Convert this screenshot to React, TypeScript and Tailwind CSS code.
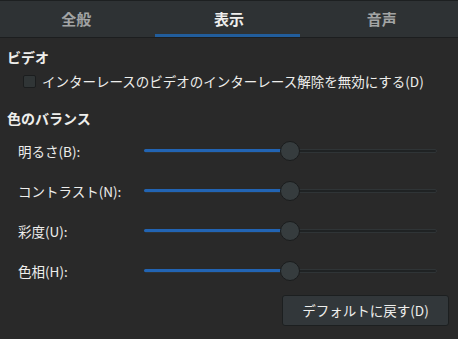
import React from 'react';

const font = { fontFamily: '"Noto Sans CJK JP", "Noto Sans", sans-serif' };

const tabs = ['全般', '表示', '音声'];

const Slider = () => (
  <div className="relative h-[20px] w-[293px]">
    <div className="absolute left-0 right-0 top-[8px] h-[4px] rounded-full bg-[#1f2223] border border-[#2f3436]"></div>
    <div className="absolute left-0 top-[8px] h-[3px] w-[145px] rounded-full bg-[#2264b3]"></div>
    <div className="absolute left-[136px] top-0 h-[20px] w-[20px] rounded-full bg-[#363c3e] border border-[#1a1c1d]"></div>
  </div>
);

const rows = ['明るさ(B):', 'コントラスト(N):', '彩度(U):', '色相(H):'];

export default function App() {
  const [checked, setChecked] = React.useState(false);
  return (
    <div className="w-[458px] h-[339px] bg-[#292929] text-[#eeeeec] flex flex-col overflow-hidden" style={font}>
      <div className="flex h-[38px] bg-[#2e3234] border-t border-[#1d2021] border-b border-b-[#1c1e1f]">
        {tabs.map((t, i) => (
          <div
            key={t}
            className={`relative flex-1 flex items-center justify-center text-[15px] font-bold ${i === 1 ? 'text-[#eeeeec]' : 'text-[#a2a4a4]'}`}
          >
            {t}
            {i === 1 && <div className="absolute left-[2px] right-[5px] bottom-0 h-[3px] bg-[#215d9c]"></div>}
          </div>
        ))}
      </div>

      <div className="flex flex-col px-[7px]">
        <div className="h-[36px] flex items-center pt-[2px] text-[14px] font-bold">ビデオ</div>
        <label className="h-[14px] flex items-center gap-[6px] pl-[16px] text-[13.5px] cursor-pointer">
          <span
            onClick={() => setChecked(!checked)}
            className="w-[13px] h-[13px] rounded-[2px] bg-[#303536] border border-[#1b1d1e] flex items-center justify-center text-[10px]"
          >
            {checked ? '✓' : ''}
          </span>
          インターレースのビデオのインターレース解除を無効にする(D)
        </label>
        <div className="h-[42px] flex items-center pt-[19px] text-[14px] font-bold">色のバランス</div>
        <div className="flex flex-col mt-[1px]">
          {rows.map((r) => (
            <div key={r} className="h-[40px] flex items-center">
              <span className="w-[137px] pl-[11px] text-[13.5px]">{r}</span>
              <Slider />
            </div>
          ))}
        </div>
        <div className="flex justify-end pr-[2px] mt-[4px]">
          <button className="w-[167px] h-[31px] rounded-[3px] bg-[#32373a] border border-[#1c1f20] text-[13.5px] text-[#eeeeec]">
            デフォルトに戻す(D)
          </button>
        </div>
      </div>
    </div>
  );
}
